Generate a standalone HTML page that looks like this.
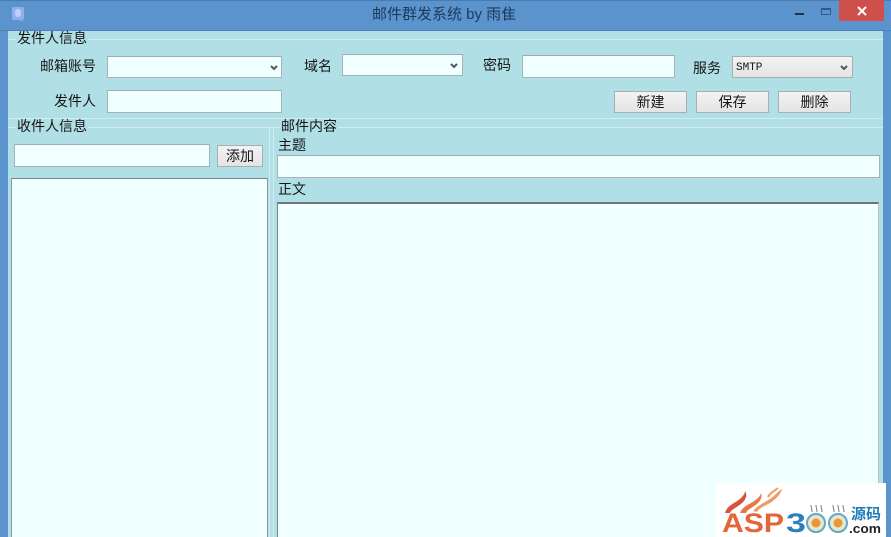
<!DOCTYPE html>
<html><head><meta charset="utf-8"><style>
html,body{margin:0;padding:0;width:891px;height:537px;overflow:hidden}
body{position:relative;background:#5b93cc;font-family:"Liberation Sans","Noto Sans CJK SC",sans-serif;font-size:14px;color:#111}
div{position:absolute;box-sizing:border-box}
#w{left:0;top:0;width:891px;height:537px;overflow:hidden;background:#5b93cc}
.t{white-space:nowrap;line-height:18px;height:18px;font-family:"WenQuanYi Zen Hei","Noto Sans CJK SC",sans-serif;font-size:14px;color:#151515}
.i{background:#f0ffff;border:1px solid #a9b2b5;border-top-color:#a2abae}
.b{background:linear-gradient(#f3f3f3,#e4e4e4);border:1px solid #a6b0b2;text-align:center;font-family:"WenQuanYi Zen Hei","Noto Sans CJK SC",sans-serif;font-size:14px;line-height:20px;color:#151515}
.l{background:#d3edef}
.p{background:#b0e0e6;height:1px}
.v{position:absolute;width:8px;height:6px}
</style></head><body><div id="w">
<div style="left:0;top:0;width:891px;height:31px;background:#5b93cc;border-top:1px solid #4a7cb0"></div>
<div style="left:0;top:30px;width:891px;height:1px;background:#4d80b5"></div>
<div style="left:8px;top:31px;width:875px;height:506px;background:#b0e0e6"></div>
<svg style="position:absolute;left:10px;top:5px" width="18" height="18"><rect x="2" y="2" width="12" height="13" rx="2" fill="#8fb0ec"/><rect x="5" y="4" width="6" height="8" rx="3" fill="#c5d8f6" opacity=".8"/><path d="M9 16H15" stroke="#7fa6d4"/></svg>
<div class="t" style="left:372px;top:6px;width:160px;font-size:15px;color:#1d3a5c;font-family:'Liberation Sans','WenQuanYi Zen Hei',sans-serif">邮件群发系统 by 雨隹</div>
<div style="left:795px;top:13px;width:9px;height:2px;background:#1f3248"></div>
<div style="left:821px;top:8px;width:10px;height:7px;border:1px solid #2f5a8a;border-top-width:2px"></div>
<div style="left:839px;top:0;width:45px;height:21px;background:#cf4f4c"></div>
<svg style="position:absolute;left:856px;top:6px" width="12" height="10"><path d="M2 1L10 9M10 1L2 9" stroke="#fff" stroke-width="2"/></svg>

<div class="l" style="left:8px;top:39px;width:875px;height:1px"></div>
<div class="l" style="left:8px;top:118px;width:875px;height:1px"></div>
<div class="l" style="left:8px;top:127px;width:875px;height:1px"></div>
<div class="l" style="left:269px;top:127px;width:1px;height:410px"></div>
<div class="l" style="left:273px;top:127px;width:1px;height:410px"></div>
<div class="p" style="left:16px;top:39px;width:72px"></div>
<div class="p" style="left:16px;top:127px;width:72px"></div>
<div class="p" style="left:280px;top:127px;width:58px"></div>

<div class="t" style="left:17px;top:29px">发件人信息</div>
<div class="t" style="left:40px;top:57px">邮箱账号</div>
<div class="t" style="left:54px;top:92px">发件人</div>
<div class="t" style="left:17px;top:117px">收件人信息</div>
<div class="t" style="left:281px;top:117px">邮件内容</div>
<div class="t" style="left:278px;top:136px">主题</div>
<div class="t" style="left:278px;top:180px">正文</div>
<div class="t" style="left:304px;top:57px">域名</div>
<div class="t" style="left:483px;top:56px">密码</div>
<div class="t" style="left:693px;top:59px">服务</div>

<div class="i" style="left:107px;top:56px;width:175px;height:22px"></div>
<svg class="v" style="left:270px;top:65px"><path d="M1 1L4 4L7 1" fill="none" stroke="#555" stroke-width="2"/></svg>
<div class="i" style="left:107px;top:90px;width:175px;height:23px"></div>
<div class="i" style="left:342px;top:54px;width:121px;height:22px"></div>
<svg class="v" style="left:450px;top:63px"><path d="M1 1L4 4L7 1" fill="none" stroke="#555" stroke-width="2"/></svg>
<div class="i" style="left:522px;top:55px;width:153px;height:23px"></div>
<div class="b" style="left:732px;top:56px;width:121px;height:22px;text-align:left;padding-left:3px;font-family:'Liberation Mono',monospace;font-size:11px;line-height:22px">SMTP</div>
<svg class="v" style="left:840px;top:65px"><path d="M1 1L4 4L7 1" fill="none" stroke="#555" stroke-width="2"/></svg>
<div class="b" style="left:614px;top:91px;width:73px;height:22px">新建</div>
<div class="b" style="left:696px;top:91px;width:73px;height:22px">保存</div>
<div class="b" style="left:778px;top:91px;width:73px;height:22px">删除</div>

<div class="i" style="left:14px;top:144px;width:196px;height:23px"></div>
<div class="b" style="left:217px;top:145px;width:46px;height:22px">添加</div>
<div class="i" style="left:11px;top:178px;width:257px;height:370px;border-color:#8f999c;border-top-color:#7c8588"></div>
<div class="i" style="left:277px;top:155px;width:603px;height:23px"></div>
<div class="i" style="left:277px;top:202px;width:602px;height:345px;border-color:#b5c2c4;border-top:2px solid #6f7778;border-left-color:#7f8789"></div>

<div style="left:716px;top:483px;width:170px;height:54px;background:#fff"></div>
<svg style="position:absolute;left:716px;top:483px" width="170" height="54">
<path d="M9 30C11 22 20 20 25 15C28 12 29 10 29 8C33 14 27 20 22 23C18 26 15 27 14 30Z" fill="#d8533a"/>
<path d="M24 30C27 22 36 21 42 15C44 13 45 11 45 10C47 15 43 20 38 23C34 26 31 27 30 30Z" fill="#e8764a"/>
<path d="M37 28C44 20 52 19 60 11C62 9 64 7 66 6C65 11 60 16 54 20C47 24 43 25 41 29Z" fill="#ee9a68"/>
<path d="M52 14C54 10 58 8 62 5" fill="none" stroke="#ee9a68" stroke-width="2"/>
<text x="6" y="49" font-family="Liberation Sans" font-weight="700" font-size="27" fill="#e4653a" textLength="62" lengthAdjust="spacingAndGlyphs">ASP</text>
<text x="70" y="49" font-family="Liberation Sans" font-weight="700" font-size="27" fill="#2b82ba" textLength="20" lengthAdjust="spacingAndGlyphs">3</text>
<circle cx="100" cy="40" r="9" fill="#ece6c8" stroke="#5fa8d0" stroke-width="2"/><circle cx="100" cy="40" r="4.5" fill="#e8963a"/>
<circle cx="122" cy="40" r="9" fill="#ece6c8" stroke="#5fa8d0" stroke-width="2"/><circle cx="122" cy="40" r="4.5" fill="#e8963a"/>
<path d="M96 29C96 26 95 25 95 22M101 29C101 26 100 25 100 22M106 29C106 26 105 25 105 22M118 29C118 26 117 25 117 22M123 29C123 26 122 25 122 22M128 29C128 26 127 25 127 22" stroke="#6f8088" fill="none"/>
<text x="135" y="36" font-family="WenQuanYi Zen Hei,Noto Sans CJK SC,sans-serif" font-size="15" font-weight="700" fill="#1f7cb8">源码</text>
<text x="133" y="50" font-family="Liberation Sans" font-size="13" font-weight="700" fill="#222" textLength="32" lengthAdjust="spacingAndGlyphs">.com</text>
</svg>
</div></body></html>
